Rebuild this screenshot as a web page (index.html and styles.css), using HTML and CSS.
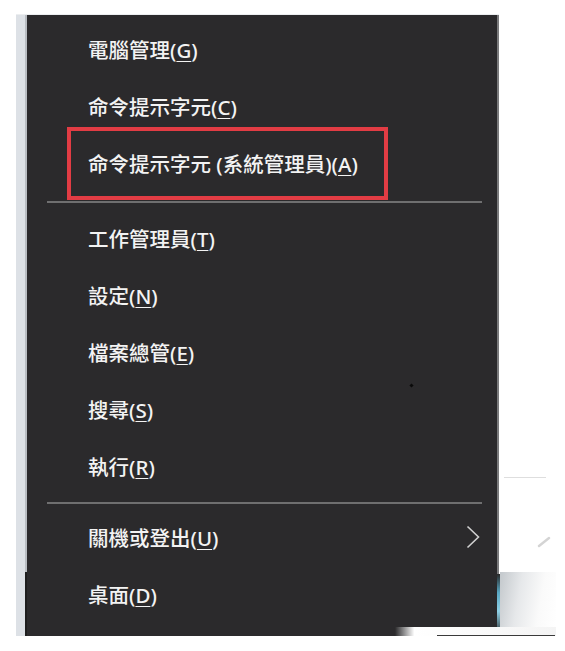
FILE: index.html
```html
<!DOCTYPE html>
<html lang="zh-Hant">
<head>
<meta charset="utf-8">
<title>Win+X 選單</title>
<link rel="stylesheet" href="styles.css">
</head>
<body>
<div class="screen">
  <div class="frame">
    <div class="strip"></div>
    <div class="menu">
      <div class="item"><span>電腦管理(<u>G</u>)</span></div>
      <div class="item"><span>命令提示字元(<u>C</u>)</span></div>
      <div class="item"><span>命令提示字元 (系統管理員)(<u>A</u>)</span></div>
      <div class="sep sep-a"></div>
      <div class="item"><span>工作管理員(<u>T</u>)</span></div>
      <div class="item"><span>設定(<u>N</u>)</span></div>
      <div class="item"><span>檔案總管(<u>E</u>)</span></div>
      <div class="item"><span>搜尋(<u>S</u>)</span></div>
      <div class="item"><span>執行(<u>R</u>)</span></div>
      <div class="sep sep-b"></div>
      <div class="item has-sub"><span>關機或登出(<u>U</u>)</span><svg class="chev" width="14" height="24" viewBox="0 0 14 24"><path d="M1.5 1.5 L12.5 12 L1.5 22.5" fill="none" stroke="#d0d0d0" stroke-width="1.6"/></svg></div>
      <div class="item"><span>桌面(<u>D</u>)</span></div>
    </div>
  </div>
  <div class="highlight"></div>
  <span class="dot"></span>
  <div class="strip-line"></div>
  <div class="bg-line"></div>
  <svg class="glint" width="14" height="12" viewBox="0 0 14 12"><path d="M2 10 L12 2" stroke="#d4d4d4" stroke-width="2.5" stroke-linecap="round"/></svg>
  <div class="desk-shade"></div>
  <div class="edge-line"></div>
  <div class="bottom-fade"></div>
  <div class="bottom-rule"></div>
</div>
</body>
</html>
```

FILE: styles.css
```css
html, body {
  margin: 0;
  padding: 0;
  background: #ffffff;
}

.screen {
  position: relative;
  width: 565px;
  height: 651px;
  padding: 15px 0 0 16px;
  box-sizing: border-box;
  overflow: hidden;
  font-family: "Noto Sans", "Noto Sans CJK TC", sans-serif;
}

.frame {
  display: flex;
  width: max-content;
  height: 621px;
  box-shadow: 0 -1px 0 #eceef0;
}

.strip {
  width: 9px;
  background: #dde1e6;
  border-right: 2px solid #b9bdc2;
}

.menu {
  width: 470px;
  background: #2b2a2c;
  border-right: 2px solid #7a7a7c;
  padding: 7px 0 12px;
  display: flex;
  flex-direction: column;
}

.item {
  height: 57px;
  box-sizing: border-box;
  display: flex;
  align-items: center;
  padding: 0 17px 3px 61px;
  color: #f3f3f3;
  font-size: 20.5px;
  font-weight: 500;
  white-space: pre;
}

.item u {
  text-decoration: underline;
  text-decoration-thickness: 1px;
  text-underline-offset: 3px;
}

.has-sub .chev {
  margin-left: auto;
}

.sep {
  height: 2px;
  background: #6f6f70;
  margin-left: 20px;
  margin-right: 15px;
}

.sep-a {
  margin-top: 8px;
  margin-bottom: 8px;
}

.sep-b {
  margin-top: 6px;
  margin-bottom: 6px;
}

.highlight {
  position: absolute;
  left: 67px;
  top: 127px;
  width: 321px;
  height: 73px;
  box-sizing: border-box;
  border: 4px solid #e23c44;
}

.dot {
  position: absolute;
  left: 410px;
  top: 384px;
  width: 3px;
  height: 3px;
  background: #0a0a0a;
  transform: rotate(45deg);
}

.strip-line {
  position: absolute;
  left: 25px;
  top: 572px;
  width: 2px;
  height: 64px;
  background: #1e1e1e;
}

.bg-line {
  position: absolute;
  left: 504px;
  top: 477px;
  width: 42px;
  height: 1px;
  background: #dedede;
}

.glint {
  position: absolute;
  left: 537px;
  top: 536px;
}

.desk-shade {
  position: absolute;
  left: 500px;
  top: 572px;
  width: 56px;
  height: 55px;
  background: linear-gradient(100deg, #c3c8cc 0%, #e6e8ea 35%, #fafafa 70%, #ffffff 100%);
}

.edge-line {
  position: absolute;
  left: 497px;
  top: 574px;
  width: 3px;
  height: 62px;
  background: linear-gradient(180deg, #2a2a2a 0%, #5aa8c4 30%, #8fd0e6 60%, #2a2a2a 100%);
}

.bottom-fade {
  position: absolute;
  left: 395px;
  top: 627px;
  width: 161px;
  height: 9px;
  background: linear-gradient(90deg, rgba(255,255,255,0) 0%, #ffffff 12%, #f4f4f4 100%);
}

.bottom-rule {
  position: absolute;
  left: 437px;
  top: 635px;
  width: 118px;
  height: 1px;
  background: #3a3a3a;
}
```
